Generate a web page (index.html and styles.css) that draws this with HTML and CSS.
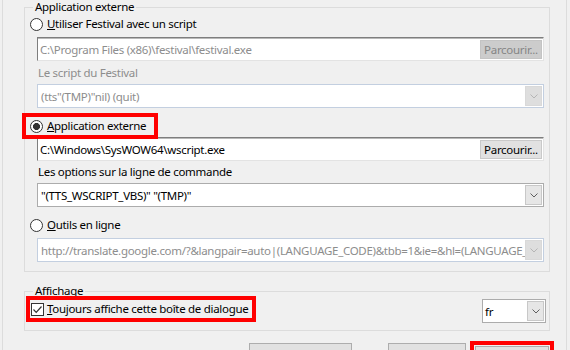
FILE: index.html
```html
<!DOCTYPE html>
<html lang="fr">
<head>
<meta charset="utf-8">
<title>Application externe</title>
<link rel="stylesheet" href="styles.css">
</head>
<body>
<div class="page">
  <fieldset class="group g1">
    <legend>Application externe</legend>
    <div class="opt r1"><span class="radio"></span><span><u>U</u>tiliser Festival avec un script</span></div>
    <div class="field f1 off"><span class="val">C:\Program Files (x86)\festival\festival.exe</span><span class="browse">Parcourir...</span></div>
    <div class="lbl l1 dim">Le script du Festival</div>
    <div class="combo c1 off"><span class="val">(tts"(TMP)"nil) (quit)</span><span class="arrow"><svg width="8" height="5" viewBox="0 0 8 5"><polyline points="0.5,0.5 4,4 7.5,0.5" fill="none" stroke="currentColor" stroke-width="1"/></svg></span></div>
    <div class="opt r2 hl"><span class="radio on"></span><span><u>A</u>pplication externe</span></div>
    <div class="field f2"><span class="val">C:\Windows\SysWOW64\wscript.exe</span><span class="browse">Parcourir...</span></div>
    <div class="lbl l2">Les options sur la ligne de commande</div>
    <div class="combo c2"><span class="val">"(TTS_WSCRIPT_VBS)" "(TMP)"</span><span class="arrow"><svg width="8" height="5" viewBox="0 0 8 5"><polyline points="0.5,0.5 4,4 7.5,0.5" fill="none" stroke="currentColor" stroke-width="1"/></svg></span></div>
    <div class="opt r3"><span class="radio"></span><span><u>O</u>utils en ligne</span></div>
    <div class="combo c3 off"><span class="val">http://translate.google.com/?&amp;langpair=auto|(LANGUAGE_CODE)&amp;tbb=1&amp;ie=&amp;hl=(LANGUAGE_CODE)</span><span class="arrow"><svg width="8" height="5" viewBox="0 0 8 5"><polyline points="0.5,0.5 4,4 7.5,0.5" fill="none" stroke="currentColor" stroke-width="1"/></svg></span></div>
  </fieldset>
  <fieldset class="group g2">
    <legend>Affichage</legend>
    <div class="disp-row">
      <div class="opt chk hl"><span class="check"><svg width="11" height="11" viewBox="0 0 11 11"><polyline points="1.5,5.5 4.2,8.3 9.5,2.5" fill="none" stroke="#333" stroke-width="1.2"/></svg></span><span><u>T</u>oujours affiche cette boîte de dialogue</span></div>
      <div class="combo lang"><span class="val">fr</span><span class="arrow"><svg width="8" height="5" viewBox="0 0 8 5"><polyline points="0.5,0.5 4,4 7.5,0.5" fill="none" stroke="currentColor" stroke-width="1"/></svg></span></div>
    </div>
  </fieldset>
  <div class="buttons">
    <button class="btn b1">Tester</button>
    <button class="btn b2">OK</button>
    <div class="btn-hl"><button class="btn b3">Annuler</button></div>
  </div>
</div>
</body>
</html>
```
FILE: styles.css
```css
html, body {
  margin: 0;
  background: #f0f0f0;
}
body {
  font-family: "Noto Sans", "Open Sans", sans-serif;
  font-size: 11.5px;
  letter-spacing: -0.3px;
  color: #000;
}
.page {
  margin-left: 2px;
  width: 563px;
  height: 350px;
  border-left: 1px solid #dcdcdc;
  border-right: 1px solid #dcdcdc;
  overflow: hidden;
}
.group {
  margin: 0 0 0 21px;
  width: 526px;
  box-sizing: border-box;
  border: 1px solid #dcdcdc;
  padding: 0 0 9px 0;
  min-inline-size: 0;
}
.group legend {
  margin-left: 8px;
  padding: 0 2px;
  line-height: 14px;
  font-size: 11.5px;
}
.g2 {
  margin-top: 12px;
  padding-bottom: 7px;
}
.opt {
  display: flex;
  align-items: center;
  gap: 4px;
  width: max-content;
  height: 18px;
  line-height: 18px;
  margin-left: 1px;
  padding: 0 8px 0 4px;
}
.r1 { margin-top: 1px; }
.r2 { margin-top: 9px; }
.r3 { margin-top: 9px; }
.hl {
  outline: 4px solid #ff0000;
}
.radio {
  width: 13px;
  height: 13px;
  box-sizing: border-box;
  border: 1px solid #333;
  border-radius: 50%;
  background: #fff;
  flex: none;
}
.radio.on {
  background: radial-gradient(circle, #333 0 3.2px, #fff 3.8px);
}
.check {
  width: 13px;
  height: 13px;
  box-sizing: border-box;
  border: 1px solid #333;
  background: #fff;
  flex: none;
  display: flex;
  align-items: center;
  justify-content: center;
}
.field, .combo {
  display: flex;
  align-items: center;
  box-sizing: border-box;
  width: 507px;
  height: 24px;
  margin-left: 12px;
  background: #fff;
}
.field {
  border-top: 1px solid #7e7e7e;
  border-left: 1px solid #7e7e7e;
  border-right: 1px solid #e3e3e3;
  border-bottom: 1px solid #e3e3e3;
  box-shadow: inset 0 1px 0 #b9b9b9;
  padding-right: 1px;
}
.f1 { margin-top: 4px; }
.f2 { margin-top: 2px; }
.val {
  flex: 1;
  min-width: 0;
  padding-left: 2px;
  white-space: nowrap;
  overflow: hidden;
}
.off .val { color: #8d8d8d; }
.browse {
  flex: none;
  box-sizing: border-box;
  width: 62px;
  height: 19px;
  line-height: 17px;
  text-align: center;
  background: #e1e1e1;
  border: 1px solid #c9c9c9;
  color: #000;
}
.f1 .browse {
  background: #cccccc;
  border-color: #c4c4c4;
  color: #858585;
}
.lbl {
  margin-left: 13px;
  line-height: 16px;
}
.l1 { margin-top: 4px; }
.l2 { margin-top: 3px; }
.dim { color: #8d8d8d; }
.combo {
  border: 1px solid #acacac;
  padding: 1px;
}
.combo.off { border-color: #c3cfe0; }
.c1 { margin-top: 3px; }
.c2 { margin-top: 3px; }
.c3 { margin-top: 4px; }
.arrow {
  flex: none;
  box-sizing: border-box;
  width: 17px;
  height: 100%;
  display: flex;
  align-items: center;
  justify-content: center;
  background: #e6e6e6;
  border: 1px solid #c8c8c8;
  color: #5f5f5f;
}
.off .arrow {
  background: #dedede;
  border-color: #d9d9d9;
  color: #b5b5b5;
}
.disp-row {
  display: flex;
  justify-content: space-between;
  align-items: flex-start;
}
.chk {
  margin-top: 2px;
  margin-left: 5px;
  padding: 0 4px 0 1px;
  gap: 3px;
}
.lang {
  width: 64px;
  margin: 1px 3px 0 0;
}
.lang .val { padding-left: 1px; }
.buttons {
  display: flex;
  align-items: flex-start;
  margin-top: 12px;
}
.btn {
  box-sizing: border-box;
  height: 23px;
  padding: 0;
  background: #e1e1e1;
  border: 1px solid #adadad;
  font-family: "Noto Sans", "Open Sans", sans-serif;
  font-size: 11.5px;
  color: #000;
}
.b1 { width: 103px; margin-left: 246px; }
.b2 { width: 78px; margin-left: 36px; }
.btn-hl {
  margin-left: 4px;
  margin-top: -2px;
  border: 4px solid #ff0000;
  padding: 1px;
  display: flex;
}
.b3 { width: 74px; }
```
